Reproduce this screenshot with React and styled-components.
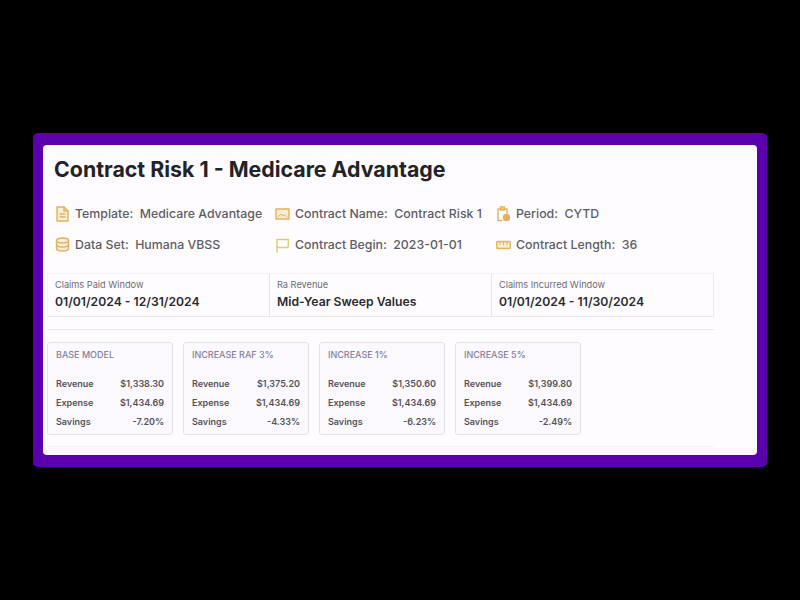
import React from 'react';
import styled, { createGlobalStyle } from 'styled-components';

const GlobalStyle = createGlobalStyle`
  html, body {
    margin: 0;
    height: 100%;
    background: #000;
  }
  #root {
    height: 100%;
  }
`;

const Page = styled.div`
  width: 800px;
  height: 600px;
  padding-top: 133px;
  box-sizing: border-box;
  display: flex;
  justify-content: center;
  align-items: flex-start;
  font-family: 'Inter', 'Liberation Sans', sans-serif;
`;

const Frame = styled.div`
  width: 734px;
  height: 334px;
  box-sizing: border-box;
  padding: 12px 10px;
  background: #5c00ad;
  border-radius: 5px;
`;

const Panel = styled.div`
  height: 310px;
  box-sizing: border-box;
  padding: 11px 0 0 4px;
  background: #fefcff;
  border-radius: 4px;
`;

const Title = styled.h1`
  margin: 0 0 0 7px;
  font-size: 21.35px;
  line-height: 26px;
  font-weight: 700;
  color: #232227;
`;

const MetaGrid = styled.div`
  display: grid;
  grid-template-columns: 220px 221px 220px;
  grid-auto-rows: 31px;
  margin: 16px 0 0 8px;
`;

const MetaItem = styled.div`
  display: flex;
  align-items: center;
  gap: 5px;
  font-size: 12.35px;
  font-weight: 500;
  color: #5e5d64;
  white-space: nowrap;
`;

const MetaIcon = styled.svg`
  width: 15px;
  height: 16px;
  flex: none;
  fill: none;
  stroke: ${(p) => p.$tint || '#e0b45c'};
  stroke-width: 1.4;
  stroke-linecap: round;
  stroke-linejoin: round;
`;

const MetaLabel = styled.span`
  margin-right: 6.5px;
`;

const WindowRow = styled.div`
  display: flex;
  width: 667px;
  margin-top: 13px;
  border: 1px solid #ebe9ee;
  border-left-color: #f8f6f9;
  border-top-color: #f4f2f6;
  box-sizing: border-box;
  height: 44px;
`;

const WindowCell = styled.div`
  flex: 1;
  box-sizing: border-box;
  padding: 5px 0 0 7px;
  & + & {
    border-left: 1px solid #e6e4ea;
  }
`;

const WindowLabel = styled.div`
  font-size: 9.2px;
  line-height: 12px;
  color: #6d6c74;
`;

const WindowValue = styled.div`
  margin-top: 3px;
  font-size: 12.2px;
  line-height: 16px;
  font-weight: 600;
  color: #2b2a30;
`;

const Divider = styled.hr`
  width: 667px;
  margin: ${(p) => p.$top}px 0 0;
  border: none;
  border-top: 1px solid ${(p) => p.$tint};
`;

const ScenarioRow = styled.div`
  display: flex;
  gap: 10px;
  margin-top: 12px;
`;

const ScenarioCard = styled.div`
  width: 126px;
  height: 93px;
  box-sizing: border-box;
  padding: 6px 8px 0;
  background: #fbf8fe;
  border: 1px solid #e4e1ea;
  border-radius: 3px;
`;

const ScenarioName = styled.div`
  font-size: 9px;
  line-height: 12px;
  font-weight: 500;
  color: #84819e;
  margin-bottom: 13px;
`;

const ScenarioLine = styled.div`
  display: flex;
  justify-content: space-between;
  font-size: 9px;
  line-height: 19px;
  font-weight: 600;
  color: #54535b;
`;

const icons = {
  file: (
    <MetaIcon viewBox="0 0 15 16">
      <path d="M2 1h7l4 4v10H2z" fill="#f8eed8" />
      <path d="M9 1v4h4M5 8h5M5 11h5" />
    </MetaIcon>
  ),
  database: (
    <MetaIcon viewBox="0 0 15 16">
      <path d="M1.500 3.500v8c0 1.400 2.700 2.500 6 2.500s6-1.100 6-2.500v-8" fill="#f8eed8" />
      <ellipse cx="7.500" cy="3.500" rx="6" ry="2.500" fill="#f8eed8" />
      <path d="M1.500 7.500c0 1.400 2.700 2.500 6 2.500s6-1.100 6-2.500" />
    </MetaIcon>
  ),
  image: (
    <MetaIcon viewBox="0 0 15 16">
      <rect x="1" y="3" width="13" height="10" fill="#f5ead2" />
      <path d="M3 11l3-3 2 2 1.500-1.500L12 11" strokeWidth="1" />
    </MetaIcon>
  ),
  flag: (
    <MetaIcon viewBox="0 0 15 16" $tint="#d9cf73">
      <path d="M2 15V2.500h11.500l-.5 8H2" />
    </MetaIcon>
  ),
  clipboard: (
    <MetaIcon viewBox="0 0 15 16">
      <path d="M6 14.500H2V3h9v4" />
      <rect x="4.500" y="1" width="4" height="3" />
      <circle cx="10.500" cy="11.500" r="3" fill="#e0b45c" />
    </MetaIcon>
  ),
  ruler: (
    <MetaIcon viewBox="0 0 15 16">
      <rect x="0.800" y="4.500" width="13.400" height="7" rx="1" fill="#f5ead2" />
      <path d="M4 4.500v3M7.500 4.500v3M11 4.500v3" strokeWidth="1" />
    </MetaIcon>
  ),
};

const metaItems = [
  { icon: 'file', label: 'Template:', value: 'Medicare Advantage' },
  { icon: 'image', label: 'Contract Name:', value: 'Contract Risk 1' },
  { icon: 'clipboard', label: 'Period:', value: 'CYTD' },
  { icon: 'database', label: 'Data Set:', value: 'Humana VBSS' },
  { icon: 'flag', label: 'Contract Begin:', value: '2023-01-01' },
  { icon: 'ruler', label: 'Contract Length:', value: '36' },
];

const windows = [
  { label: 'Claims Paid Window', value: '01/01/2024 - 12/31/2024' },
  { label: 'Ra Revenue', value: 'Mid-Year Sweep Values' },
  { label: 'Claims Incurred Window', value: '01/01/2024 - 11/30/2024' },
];

const scenarios = [
  { name: 'BASE MODEL', revenue: '$1,338.30', savings: '-7.20%' },
  { name: 'INCREASE RAF 3%', revenue: '$1,375.20', savings: '-4.33%' },
  { name: 'INCREASE 1%', revenue: '$1,350.60', savings: '-6.23%' },
  { name: 'INCREASE 5%', revenue: '$1,399.80', savings: '-2.49%' },
];

export default function App() {
  return (
    <Page>
      <GlobalStyle />
      <Frame>
        <Panel>
          <Title>Contract Risk 1 - Medicare Advantage</Title>
          <MetaGrid>
            {metaItems.map((item) => (
              <MetaItem key={item.label}>
                {icons[item.icon]}
                <span>
                  <MetaLabel>{item.label}</MetaLabel>
                  {item.value}
                </span>
              </MetaItem>
            ))}
          </MetaGrid>
          <WindowRow>
            {windows.map((w) => (
              <WindowCell key={w.label}>
                <WindowLabel>{w.label}</WindowLabel>
                <WindowValue>{w.value}</WindowValue>
              </WindowCell>
            ))}
          </WindowRow>
          <Divider $top={12} $tint="#e8e6eb" />
          <ScenarioRow>
            {scenarios.map((s) => (
              <ScenarioCard key={s.name}>
                <ScenarioName>{s.name}</ScenarioName>
                <ScenarioLine><span>Revenue</span><span>{s.revenue}</span></ScenarioLine>
                <ScenarioLine><span>Expense</span><span>$1,434.69</span></ScenarioLine>
                <ScenarioLine><span>Savings</span><span>{s.savings}</span></ScenarioLine>
              </ScenarioCard>
            ))}
          </ScenarioRow>
          <Divider $top={11} $tint="#f3f1f5" />
        </Panel>
      </Frame>
    </Page>
  );
}
